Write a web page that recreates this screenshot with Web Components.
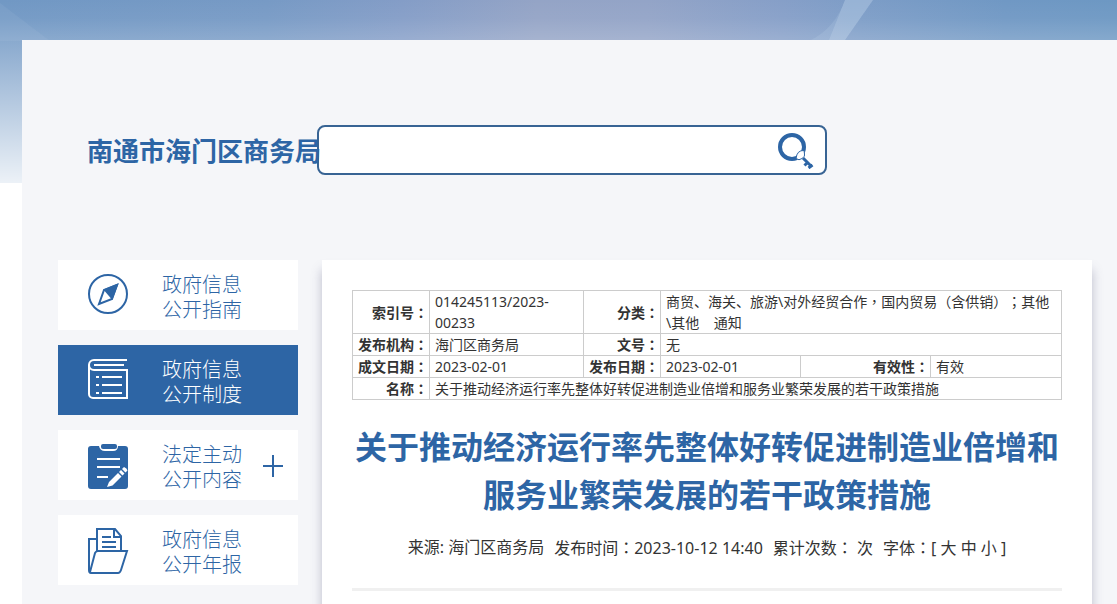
<!DOCTYPE html>
<html lang="zh-CN">
<head>
<meta charset="utf-8">
<title>南通市海门区商务局</title>
<style>
body { margin: 0; background: #fff; color: #333; font-family: "Noto Sans", "Noto Sans CJK SC", sans-serif; }
</style>
</head>
<body>
<gov-page>
  <site-search slot="search" heading="南通市海门区商务局"></site-search>
  <side-nav slot="nav">
    <nav-item icon="compass"><span>政府信息</span><span>公开指南</span></nav-item>
    <nav-item icon="book" active><span>政府信息</span><span>公开制度</span></nav-item>
    <nav-item icon="board" expandable><span>法定主动</span><span>公开内容</span></nav-item>
    <nav-item icon="folder"><span>政府信息</span><span>公开年报</span></nav-item>
  </side-nav>
  <policy-article>
    <span slot="title">关于推动经济运行率先整体好转促进制造业倍增和服务业繁荣发展的若干政策措施</span>
  </policy-article>
</gov-page>

<template id="gov-page">
  <style>
    :host { display: block; position: relative; min-height: 100vh; box-sizing: border-box; padding: 40px 0 0 22px; }
    .banner { position: absolute; inset: 0 0 auto 0; width: 100%; height: 183px; z-index: -1; }
    .panel { background: #f5f6f9; min-height: calc(100vh - 40px); box-sizing: border-box; padding: 85px 25px 0 36px; display: flex; flex-direction: column; gap: 85px; }
    .columns { flex: 1; display: flex; gap: 24px; }
  </style>
  <svg class="banner" viewBox="0 0 1117 183" preserveAspectRatio="none" aria-hidden="true">
    <defs>
      <linearGradient id="h"><stop offset="0" stop-color="#7198c4"/><stop offset=".24" stop-color="#779ac5"/><stop offset=".36" stop-color="#849dc7"/><stop offset=".48" stop-color="#94a4c6"/><stop offset=".58" stop-color="#93a4c7"/><stop offset=".7" stop-color="#869fc8"/><stop offset=".77" stop-color="#7d9dc7"/><stop offset=".9" stop-color="#7098c4"/><stop offset="1" stop-color="#6d98c3"/></linearGradient>
      <linearGradient id="v" x2="0" y2="1"><stop offset="0" stop-color="#fff" stop-opacity="0"/><stop offset=".1" stop-color="#fff" stop-opacity=".04"/><stop offset=".22" stop-color="#fff" stop-opacity=".17"/><stop offset="1" stop-color="#fff" stop-opacity=".87"/></linearGradient>
    </defs>
    <path fill="url(#h)" d="M0 0h1117v183H0z"/>
    <path fill="#fff" fill-opacity=".05" d="M0 3L50 41H0z"/>
    <path fill="#b4cbe6" fill-opacity=".2" d="M845 0h28l-28 40h-34q24-12 34-40z"/>
    <path fill="#b4cbe6" fill-opacity=".35" d="M845 0h28l-28 40h-16z"/>
    <path fill="url(#v)" d="M0 0h1117v183H0z"/>
  </svg>
  <div class="panel">
    <slot name="search"></slot>
    <div class="columns"><slot name="nav"></slot><slot></slot></div>
  </div>
</template>

<template id="site-search">
  <style>
    :host { display: flex; align-items: center; padding-left: 29px; }
    h1 { margin: 0; flex: 0 0 230px; min-width: 0; padding-top: 2px; white-space: nowrap; font-size: 26px; line-height: 48px; color: #2d65a5; position: relative; z-index: 1; }
    form { flex: 0 1 510px; box-sizing: border-box; height: 50px; display: flex; align-items: center; border: 2px solid #386494; border-radius: 8px; background: #fff; padding-right: 10px; }
    input { flex: 1; min-width: 0; height: 40px; border: 0; outline: 0; background: none; padding: 0 12px; font: inherit; font-size: 16px; }
    button { border: 0; background: none; padding: 0; width: 38px; height: 38px; }
    svg { display: block; }
  </style>
  <h1></h1>
  <form role="search">
    <input type="text" aria-label="搜索">
    <button type="button" aria-label="搜索">
      <svg width="38" height="38" viewBox="0 0 38 38">
        <circle cx="15" cy="16" r="12" fill="none" stroke="#2d65a5" stroke-width="4"/>
        <path d="M26 27l9 9M27.500 34.500l3-3M31.500 37l4-3" stroke="#2d65a5" stroke-width="3" fill="none"/>
        <path d="M27 19.500q-7-.5-8 8 3 2.500 6 0 3.500-2 2.500-4.500z" fill="#fff" stroke="#2d65a5"/>
      </svg>
    </button>
  </form>
</template>

<template id="side-nav">
  <style>
    :host { display: block; flex: 0 0 240px; }
    nav { display: flex; flex-direction: column; gap: 15px; }
  </style>
  <nav><slot></slot></nav>
</template>

<template id="nav-item">
  <style>
    :host { display: block; color: #2d65a5; background: #fff; }
    :host([active]) { color: #fff; background: #2d65a5; }
    a { display: flex; align-items: center; height: 70px; padding: 0 14px 0 28px; color: inherit; text-decoration: none; font-size: 20px; font-weight: 300; line-height: 25px; }
    .label { display: flex; flex-direction: column; margin-left: 32px; padding-top: 3px; flex: 1; }
    .icon, .plus { display: block; }
  </style>
  <a href="#"><svg class="icon" width="44" height="50" viewBox="0 0 44 50" fill="none" stroke="currentColor" stroke-width="2" aria-hidden="true"></svg><span class="label"><slot></slot></span></a>
</template>

<template id="policy-article">
  <style>
    :host { display: block; flex: 1; min-width: 0; box-sizing: border-box; background: #fff; padding: 30px 30px 14px; box-shadow: 0 10px 10px rgba(80, 80, 120, .35); text-spacing-trim: space-all; }
    table { width: 100%; table-layout: fixed; border-collapse: collapse; font-size: 14px; line-height: 21px; }
    th, td { border: 1px solid #ccc; padding: 0 4px 0 5px; text-align: left; vertical-align: middle; }
    th { text-align: right; white-space: nowrap; padding-right: 1px; }
    .label { width: 77px; } .first { width: 154px; } .second { width: 140px; } .status { width: 130px; }
    h2 { margin: 23px 0 0; font-size: 32px; line-height: 48px; text-align: center; color: #2d65a5; }
    .meta { display: flex; justify-content: center; gap: 10px; margin-top: 16px; font-size: 16px; line-height: 24px; white-space: pre; }
    .meta a { color: inherit; text-decoration: none; }
    hr { border: 0; height: 3px; margin: 28px 0 0; background: #f0f0f0; }
    i { font-style: normal; font-family: "Noto Sans CJK TC", sans-serif; }
  </style>
  <table>
    <colgroup><col class="label"><col class="first"><col class="label"><col class="second"><col class="status"><col></colgroup>
    <tbody>
      <tr><th scope="row">索引号<i lang="zh-Hant">：</i></th><td>014245113/2023-00233</td><th scope="row">分类<i lang="zh-Hant">：</i></th><td colspan="3">商贸、海关、旅游\对外经贸合作<i lang="zh-Hant">，</i>国内贸易（含供销）<i lang="zh-Hant">；</i>其他<wbr>\其他&nbsp;&nbsp;&nbsp;&nbsp;通知</td></tr>
      <tr><th scope="row">发布机构<i lang="zh-Hant">：</i></th><td>海门区商务局</td><th scope="row">文号<i lang="zh-Hant">：</i></th><td colspan="3">无</td></tr>
      <tr><th scope="row">成文日期<i lang="zh-Hant">：</i></th><td>2023-02-01</td><th scope="row">发布日期<i lang="zh-Hant">：</i></th><td>2023-02-01</td><th scope="row">有效性<i lang="zh-Hant">：</i></th><td>有效</td></tr>
      <tr><th scope="row">名称<i lang="zh-Hant">：</i></th><td colspan="5">关于推动经济运行率先整体好转促进制造业倍增和服务业繁荣发展的若干政策措施</td></tr>
    </tbody>
  </table>
  <h2><slot name="title"></slot></h2>
  <div class="meta"><span>来源: 海门区商务局</span><span>发布时间<i lang="zh-Hant">：</i>2023-10-12 14:40</span><span>累计次数<i lang="zh-Hant">：</i> 次</span><span>字体<i lang="zh-Hant">：</i>[ <a href="#">大</a> <a href="#">中</a> <a href="#">小</a> ]</span></div>
  <hr>
</template>

<script>
const icons = {
  compass: '<circle cx="22" cy="24" r="19"/><path d="M31 15L18 20 13 34 26 29z"/><path d="M31 15L19 20 26 28z" fill="currentColor"/>',
  book: '<path d="M41 5H8a5 5 0 0 0 0 10h33v28H7a4 4 0 0 1-4-4V10M8 10h30M10 22h3M16 22h20M10 30h3M16 30h20M10 38h3M16 38h20"/>',
  board: '<path d="M5 6h8q1 5 6 5h8q5 0 5-5h7q3 0 3 3v37q0 3-3 3H5q-3 0-3-3V9q0-3 3-3z" fill="currentColor" stroke="none"/><rect x="15" y="4" width="16" height="5" rx="2" fill="currentColor" stroke="none"/><path d="M11 19h23M11 27h23M11 37h11" stroke="#fff"/><path d="M20 48l2-7 15-15q5 1 5 6L27 46z" fill="currentColor" stroke="none"/><path d="M21 47l2-5 9-9 3.500 3.500-9 9zM33 32l2-2 3.500 3.500-2 2zM36 29l2-2q3 1 3.500 3.500l-2 2z" fill="#fff" stroke="none"/>',
  folder: '<path d="M4 47L9 28q1-2 3-2h29l-6 19q-1 3-3 3H5q-2 0-2-3V14h8M11 26V4h18l6 7v15M28 5v7h7M16 12h9M16 17h14M16 22h14"/>'
};

function define(name, setup) {
  customElements.define(name, class extends HTMLElement {
    constructor() {
      super();
      const root = this.attachShadow({ mode: "open" });
      root.append(document.getElementById(name).content.cloneNode(true));
      if (setup) setup(this, root);
    }
  });
}

define("gov-page");
define("site-search", (el, root) => {
  root.querySelector("h1").textContent = el.getAttribute("heading");
});
define("side-nav");
define("nav-item", (el, root) => {
  root.querySelector(".icon").innerHTML = icons[el.getAttribute("icon")];
  if (el.hasAttribute("expandable")) {
    root.querySelector("a").insertAdjacentHTML("beforeend", '<svg class="plus" width="22" height="24" viewBox="0 0 22 24" fill="none" stroke="currentColor" stroke-width="2" aria-hidden="true"><path d="M11 2v22M1 13h20"/></svg>');
  }
});
define("policy-article");
</script>
</body>
</html>
